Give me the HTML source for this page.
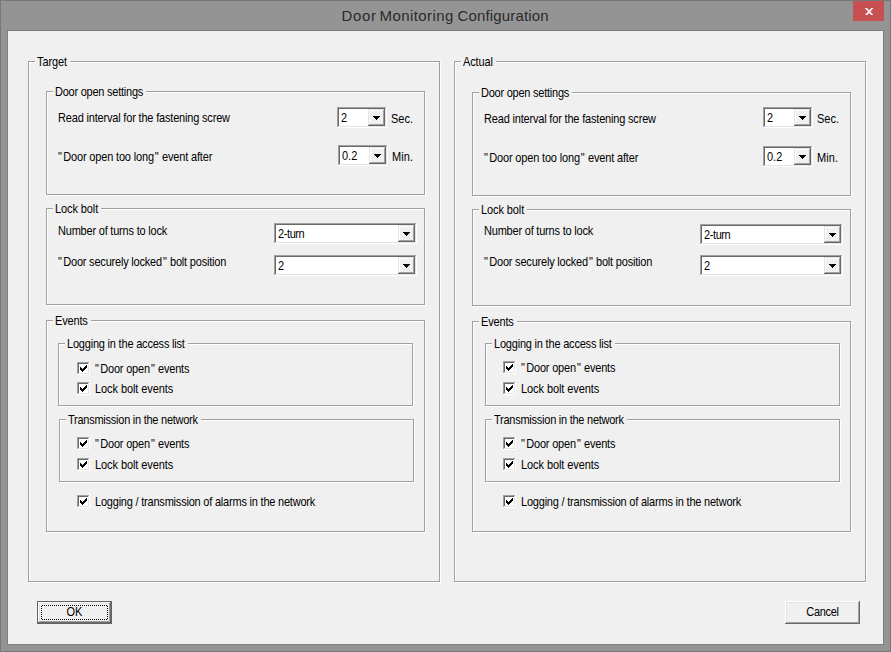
<!DOCTYPE html>
<html lang="en">
<head>
<meta charset="utf-8">
<title>Door Monitoring Configuration</title>
<style>
html,body{margin:0;padding:0;}
body{width:891px;height:652px;overflow:hidden;background:#949494;position:relative;
  font-family:"Liberation Sans",Arial,sans-serif;font-size:11px;line-height:13px;color:#000;}
#win{position:absolute;left:0;top:0;width:889px;height:650px;border:1px solid #787878;background:#949494;}
#title{position:absolute;left:0;top:6px;width:891px;height:20px;font-size:15px;line-height:20px;color:#2b2b2b;white-space:pre;}
#title span{position:absolute;top:0;}
#close{position:absolute;left:853px;top:1px;width:31px;height:20px;background:#c75050;}
#close svg{position:absolute;left:11px;top:7px;overflow:hidden;}
#client{position:absolute;left:8px;top:31px;width:875px;height:613px;background:#f0f0f0;outline:1px solid #7e7e7e;}
.t,.lg{position:absolute;white-space:nowrap;height:13px;transform:scaleY(1.12);transform-origin:0 10px;}
.lg{background:#f0f0f0;padding:0 3px 0 2px;}
.gb{position:absolute;border:1px solid #a0a0a0;box-shadow:1px 1px 0 #fff,inset 1px 1px 0 #fff;}
.cb{position:absolute;height:21px;background:#fff;
  box-shadow:inset -1px -1px 0 #fff,inset 1px 1px 0 #a0a0a0,inset -2px -2px 0 #e3e3e3,inset 2px 2px 0 #696969;}
.cv{position:absolute;left:4px;top:5px;height:13px;white-space:nowrap;transform:scaleY(1.12);transform-origin:0 10px;}
.dd{position:absolute;right:2px;top:2px;width:17px;height:17px;background:#f0f0f0;
  box-shadow:inset -1px -1px 0 #696969,inset 1px 1px 0 #e3e3e3,inset -2px -2px 0 #a0a0a0,inset 2px 2px 0 #fff;}
.ar{position:absolute;left:5px;top:7px;}
.cx{position:absolute;width:13px;height:13px;background:#fff;
  box-shadow:inset -1px -1px 0 #fff,inset 1px 1px 0 #a0a0a0,inset -2px -2px 0 #e3e3e3,inset 2px 2px 0 #696969;}
.ck{position:absolute;left:3px;top:3px;}
.btn{position:absolute;width:75px;height:23px;background:#f0f0f0;text-align:center;line-height:23px;
  box-shadow:inset -1px -1px 0 #696969,inset 1px 1px 0 #fff,inset -2px -2px 0 #a0a0a0,inset 2px 2px 0 #e3e3e3;}
.btn.def{box-shadow:inset 0 0 0 1px #646464,inset -2px -2px 0 #696969,inset 2px 2px 0 #fff,inset -3px -3px 0 #a0a0a0,inset 3px 3px 0 #e3e3e3;}
.bt{display:inline-block;transform:scaleY(1.12);transform-origin:0 14px;}
.q1{margin-right:1.5px;}
.q2{margin-left:1px;margin-right:0.5px;}
.fr{position:absolute;left:4px;top:4px;width:67px;height:15px;
  background:linear-gradient(90deg,transparent 50%,#000 50%) 0 0/2px 1px repeat-x,
             linear-gradient(90deg,transparent 50%,#000 50%) 0 14px/2px 1px repeat-x,
             linear-gradient(180deg,transparent 50%,#000 50%) 0 0/1px 2px repeat-y,
             linear-gradient(180deg,transparent 50%,#000 50%) 66px 0/1px 2px repeat-y;}
</style>
</head>
<body>
<div id="win"></div>
<div id="title"><span style="left:341.5px;letter-spacing:0.65px">Door </span><span style="left:379.6px;letter-spacing:0.41px">Monitoring </span><span style="left:457.6px;letter-spacing:0.14px">Configuration</span></div>
<div id="close"><svg width="10" height="7" viewBox="0 0 10 7"><path d="M1.06 -1L9.06 8M9.24 -1L1.24 8" stroke="#fff" stroke-width="1.6" fill="none"/></svg></div>
<div id="client"></div>
<div class="gb" style="left:28px;top:61px;width:410px;height:519px"></div>
<span class="lg" style="left:35px;top:56px;letter-spacing:-0.1px;">Target</span>
<div class="gb" style="left:46px;top:91px;width:377px;height:102px"></div>
<span class="lg" style="left:53px;top:86px;letter-spacing:-0.24px;">Door open settings</span>
<span class="t" style="left:58px;top:112px;letter-spacing:-0.18px;">Read interval for the fastening screw</span>
<div class="cb" style="left:337px;top:107px;width:50px"><span class="cv" style="">2</span><span class="dd"><svg class="ar" width="7" height="4" viewBox="0 0 7 4" shape-rendering="crispEdges"><path d="M0 0h7v1h-7zM1 1h5v1h-5zM2 2h3v1h-3zM3 3h1v1h-1z" fill="#000"/></svg></span></div>
<span class="t" style="left:391px;top:113px;">Sec.</span>
<span class="t" style="left:58px;top:151px;letter-spacing:-0.165px;"><span class="q1">&quot;</span>Door open too long<span class="q2">&quot;</span> event after</span>
<div class="cb" style="left:338px;top:145px;width:50px"><span class="cv" style="">0.2</span><span class="dd"><svg class="ar" width="7" height="4" viewBox="0 0 7 4" shape-rendering="crispEdges"><path d="M0 0h7v1h-7zM1 1h5v1h-5zM2 2h3v1h-3zM3 3h1v1h-1z" fill="#000"/></svg></span></div>
<span class="t" style="left:392px;top:151px;letter-spacing:0.1px;">Min.</span>
<div class="gb" style="left:46px;top:208px;width:377px;height:95px"></div>
<span class="lg" style="left:53px;top:203px;letter-spacing:-0.1px;">Lock bolt</span>
<span class="t" style="left:58px;top:225px;letter-spacing:-0.205px;">Number of turns to lock</span>
<div class="cb" style="left:274px;top:223px;width:143px"><span class="cv" style="letter-spacing:-0.4px;">2-turn</span><span class="dd"><svg class="ar" width="7" height="4" viewBox="0 0 7 4" shape-rendering="crispEdges"><path d="M0 0h7v1h-7zM1 1h5v1h-5zM2 2h3v1h-3zM3 3h1v1h-1z" fill="#000"/></svg></span></div>
<span class="t" style="left:58px;top:256px;letter-spacing:-0.2px;"><span class="q1">&quot;</span>Door securely locked<span class="q2">&quot;</span> bolt position</span>
<div class="cb" style="left:274px;top:255px;width:143px"><span class="cv" style="">2</span><span class="dd"><svg class="ar" width="7" height="4" viewBox="0 0 7 4" shape-rendering="crispEdges"><path d="M0 0h7v1h-7zM1 1h5v1h-5zM2 2h3v1h-3zM3 3h1v1h-1z" fill="#000"/></svg></span></div>
<div class="gb" style="left:46px;top:320px;width:377px;height:210px"></div>
<span class="lg" style="left:53px;top:315px;letter-spacing:-0.16px;">Events</span>
<div class="gb" style="left:58px;top:343px;width:353px;height:61px"></div>
<span class="lg" style="left:65px;top:338px;letter-spacing:-0.2px;">Logging in the access list</span>
<span class="cx" style="left:77px;top:362px"><svg class="ck" width="7" height="7" viewBox="0 0 7 7" shape-rendering="crispEdges"><path d="M0 2h1v3h-1zM1 3h1v3h-1zM2 4h1v3h-1zM3 3h1v3h-1zM4 2h1v3h-1zM5 1h1v3h-1zM6 0h1v3h-1z" fill="#000"/></svg></span>
<span class="t" style="left:95px;top:363px;letter-spacing:-0.19px;"><span class="q1">&quot;</span>Door open<span class="q2">&quot;</span> events</span>
<span class="cx" style="left:77px;top:382px"><svg class="ck" width="7" height="7" viewBox="0 0 7 7" shape-rendering="crispEdges"><path d="M0 2h1v3h-1zM1 3h1v3h-1zM2 4h1v3h-1zM3 3h1v3h-1zM4 2h1v3h-1zM5 1h1v3h-1zM6 0h1v3h-1z" fill="#000"/></svg></span>
<span class="t" style="left:95px;top:383px;letter-spacing:-0.08px;">Lock bolt events</span>
<div class="gb" style="left:59px;top:419px;width:353px;height:61px"></div>
<span class="lg" style="left:66px;top:414px;letter-spacing:-0.25px;">Transmission in the network</span>
<span class="cx" style="left:77px;top:437px"><svg class="ck" width="7" height="7" viewBox="0 0 7 7" shape-rendering="crispEdges"><path d="M0 2h1v3h-1zM1 3h1v3h-1zM2 4h1v3h-1zM3 3h1v3h-1zM4 2h1v3h-1zM5 1h1v3h-1zM6 0h1v3h-1z" fill="#000"/></svg></span>
<span class="t" style="left:95px;top:438px;letter-spacing:-0.19px;"><span class="q1">&quot;</span>Door open<span class="q2">&quot;</span> events</span>
<span class="cx" style="left:77px;top:458px"><svg class="ck" width="7" height="7" viewBox="0 0 7 7" shape-rendering="crispEdges"><path d="M0 2h1v3h-1zM1 3h1v3h-1zM2 4h1v3h-1zM3 3h1v3h-1zM4 2h1v3h-1zM5 1h1v3h-1zM6 0h1v3h-1z" fill="#000"/></svg></span>
<span class="t" style="left:95px;top:459px;letter-spacing:-0.08px;">Lock bolt events</span>
<span class="cx" style="left:77px;top:495px"><svg class="ck" width="7" height="7" viewBox="0 0 7 7" shape-rendering="crispEdges"><path d="M0 2h1v3h-1zM1 3h1v3h-1zM2 4h1v3h-1zM3 3h1v3h-1zM4 2h1v3h-1zM5 1h1v3h-1zM6 0h1v3h-1z" fill="#000"/></svg></span>
<span class="t" style="left:95px;top:496px;letter-spacing:-0.208px;">Logging / transmission of alarms in the network</span>
<div class="gb" style="left:454px;top:61px;width:410px;height:519px"></div>
<span class="lg" style="left:461px;top:56px;letter-spacing:-0.14px;">Actual</span>
<div class="gb" style="left:472px;top:92px;width:377px;height:102px"></div>
<span class="lg" style="left:479px;top:87px;letter-spacing:-0.24px;">Door open settings</span>
<span class="t" style="left:484px;top:113px;letter-spacing:-0.18px;">Read interval for the fastening screw</span>
<div class="cb" style="left:763px;top:107px;width:50px"><span class="cv" style="">2</span><span class="dd"><svg class="ar" width="7" height="4" viewBox="0 0 7 4" shape-rendering="crispEdges"><path d="M0 0h7v1h-7zM1 1h5v1h-5zM2 2h3v1h-3zM3 3h1v1h-1z" fill="#000"/></svg></span></div>
<span class="t" style="left:817px;top:113px;">Sec.</span>
<span class="t" style="left:484px;top:152px;letter-spacing:-0.165px;"><span class="q1">&quot;</span>Door open too long<span class="q2">&quot;</span> event after</span>
<div class="cb" style="left:763px;top:146px;width:50px"><span class="cv" style="">0.2</span><span class="dd"><svg class="ar" width="7" height="4" viewBox="0 0 7 4" shape-rendering="crispEdges"><path d="M0 0h7v1h-7zM1 1h5v1h-5zM2 2h3v1h-3zM3 3h1v1h-1z" fill="#000"/></svg></span></div>
<span class="t" style="left:817px;top:152px;letter-spacing:0.1px;">Min.</span>
<div class="gb" style="left:472px;top:209px;width:377px;height:95px"></div>
<span class="lg" style="left:479px;top:204px;letter-spacing:-0.1px;">Lock bolt</span>
<span class="t" style="left:484px;top:225px;letter-spacing:-0.205px;">Number of turns to lock</span>
<div class="cb" style="left:700px;top:224px;width:143px"><span class="cv" style="letter-spacing:-0.4px;">2-turn</span><span class="dd"><svg class="ar" width="7" height="4" viewBox="0 0 7 4" shape-rendering="crispEdges"><path d="M0 0h7v1h-7zM1 1h5v1h-5zM2 2h3v1h-3zM3 3h1v1h-1z" fill="#000"/></svg></span></div>
<span class="t" style="left:484px;top:256px;letter-spacing:-0.2px;"><span class="q1">&quot;</span>Door securely locked<span class="q2">&quot;</span> bolt position</span>
<div class="cb" style="left:700px;top:255px;width:143px"><span class="cv" style="">2</span><span class="dd"><svg class="ar" width="7" height="4" viewBox="0 0 7 4" shape-rendering="crispEdges"><path d="M0 0h7v1h-7zM1 1h5v1h-5zM2 2h3v1h-3zM3 3h1v1h-1z" fill="#000"/></svg></span></div>
<div class="gb" style="left:472px;top:321px;width:377px;height:209px"></div>
<span class="lg" style="left:479px;top:316px;letter-spacing:-0.16px;">Events</span>
<div class="gb" style="left:485px;top:343px;width:353px;height:61px"></div>
<span class="lg" style="left:492px;top:338px;letter-spacing:-0.2px;">Logging in the access list</span>
<span class="cx" style="left:503px;top:361px"><svg class="ck" width="7" height="7" viewBox="0 0 7 7" shape-rendering="crispEdges"><path d="M0 2h1v3h-1zM1 3h1v3h-1zM2 4h1v3h-1zM3 3h1v3h-1zM4 2h1v3h-1zM5 1h1v3h-1zM6 0h1v3h-1z" fill="#000"/></svg></span>
<span class="t" style="left:521px;top:362px;letter-spacing:-0.19px;"><span class="q1">&quot;</span>Door open<span class="q2">&quot;</span> events</span>
<span class="cx" style="left:503px;top:382px"><svg class="ck" width="7" height="7" viewBox="0 0 7 7" shape-rendering="crispEdges"><path d="M0 2h1v3h-1zM1 3h1v3h-1zM2 4h1v3h-1zM3 3h1v3h-1zM4 2h1v3h-1zM5 1h1v3h-1zM6 0h1v3h-1z" fill="#000"/></svg></span>
<span class="t" style="left:521px;top:383px;letter-spacing:-0.08px;">Lock bolt events</span>
<div class="gb" style="left:485px;top:419px;width:353px;height:61px"></div>
<span class="lg" style="left:492px;top:414px;letter-spacing:-0.25px;">Transmission in the network</span>
<span class="cx" style="left:503px;top:437px"><svg class="ck" width="7" height="7" viewBox="0 0 7 7" shape-rendering="crispEdges"><path d="M0 2h1v3h-1zM1 3h1v3h-1zM2 4h1v3h-1zM3 3h1v3h-1zM4 2h1v3h-1zM5 1h1v3h-1zM6 0h1v3h-1z" fill="#000"/></svg></span>
<span class="t" style="left:521px;top:438px;letter-spacing:-0.19px;"><span class="q1">&quot;</span>Door open<span class="q2">&quot;</span> events</span>
<span class="cx" style="left:503px;top:458px"><svg class="ck" width="7" height="7" viewBox="0 0 7 7" shape-rendering="crispEdges"><path d="M0 2h1v3h-1zM1 3h1v3h-1zM2 4h1v3h-1zM3 3h1v3h-1zM4 2h1v3h-1zM5 1h1v3h-1zM6 0h1v3h-1z" fill="#000"/></svg></span>
<span class="t" style="left:521px;top:459px;letter-spacing:-0.08px;">Lock bolt events</span>
<span class="cx" style="left:503px;top:495px"><svg class="ck" width="7" height="7" viewBox="0 0 7 7" shape-rendering="crispEdges"><path d="M0 2h1v3h-1zM1 3h1v3h-1zM2 4h1v3h-1zM3 3h1v3h-1zM4 2h1v3h-1zM5 1h1v3h-1zM6 0h1v3h-1z" fill="#000"/></svg></span>
<span class="t" style="left:521px;top:496px;letter-spacing:-0.208px;">Logging / transmission of alarms in the network</span>
<div class="btn def" style="left:37px;top:601px"><span class="fr"></span><span class="bt">OK</span></div>
<div class="btn" style="left:785px;top:601px"><span class="bt" style="letter-spacing:-0.3px">Cancel</span></div>
</body>
</html>
